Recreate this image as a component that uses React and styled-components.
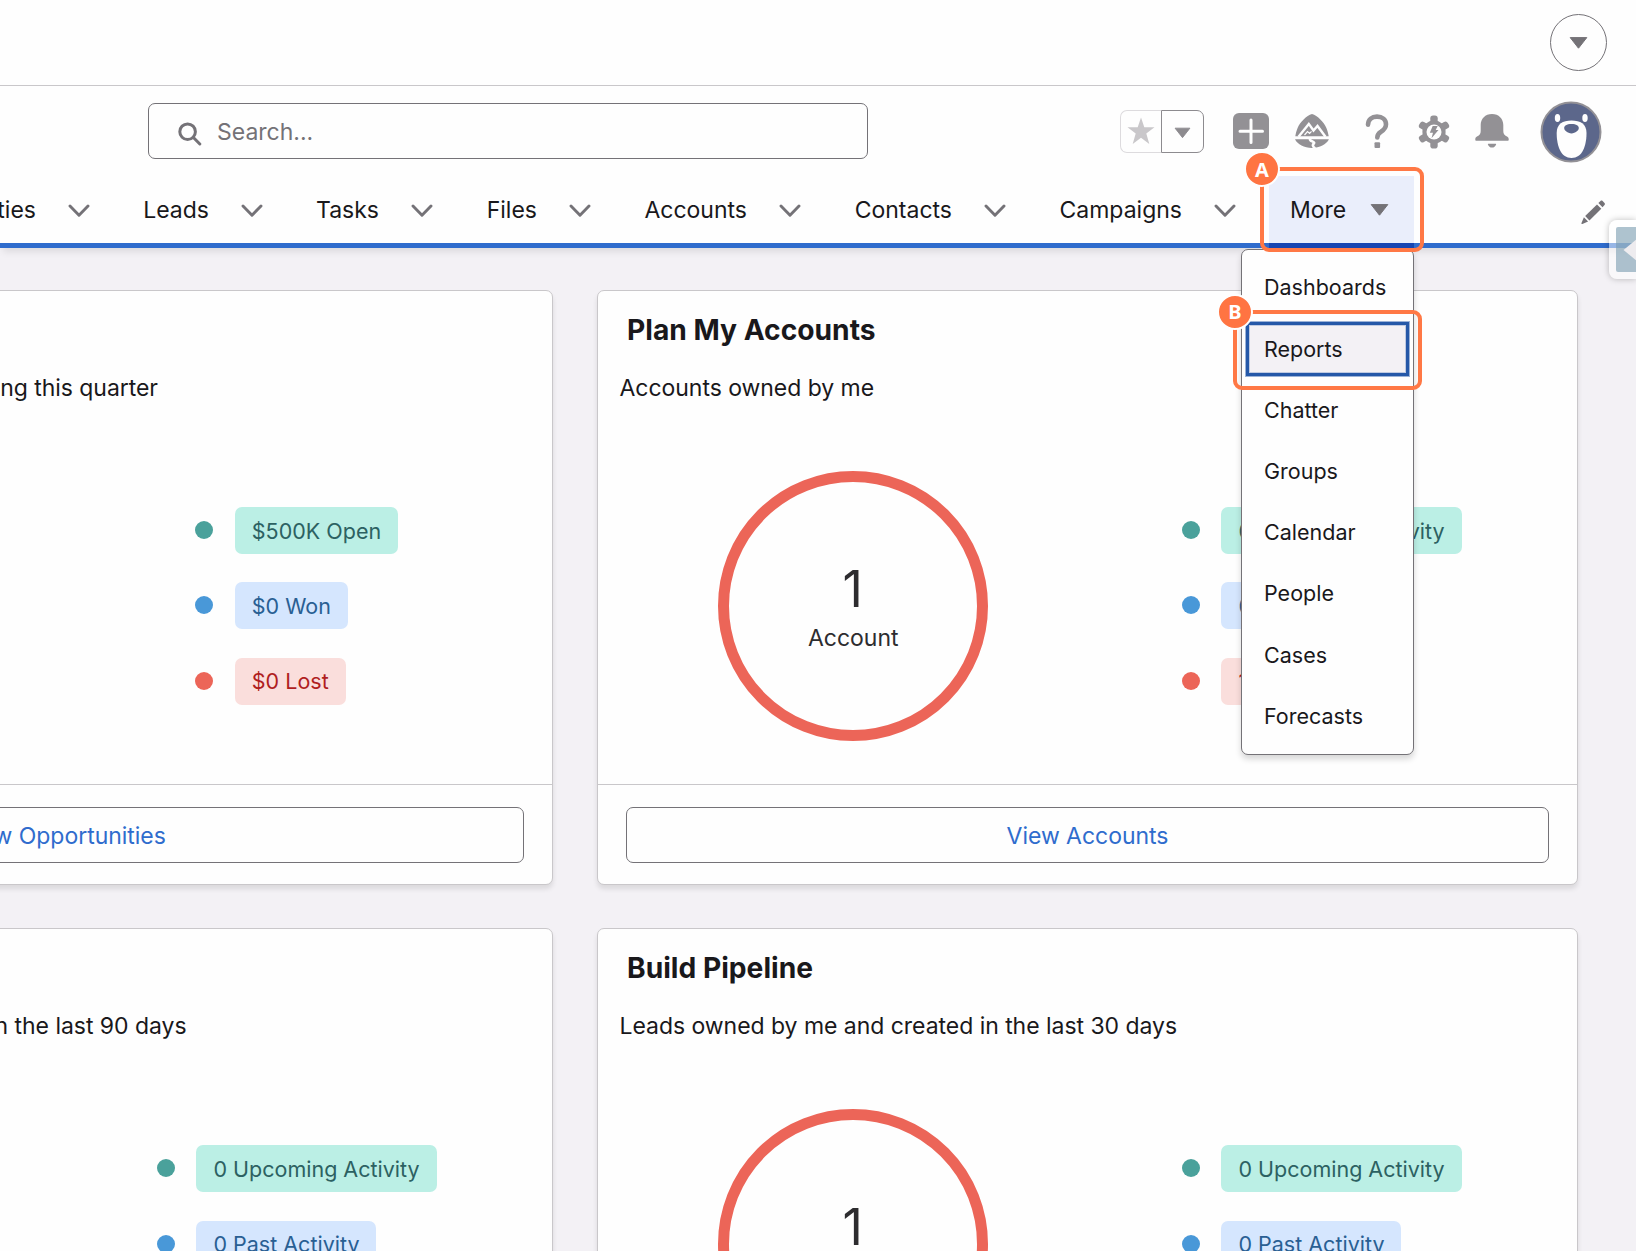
import styled, { createGlobalStyle } from "styled-components";

const navItems = [
    { label: 'Opportunities', width: 174 },
    { label: 'Leads', width: 173 },
    { label: 'Tasks', width: 170 },
    { label: 'Files', width: 158 },
    { label: 'Accounts', width: 210 },
    { label: 'Contacts', width: 205 },
    { label: 'Campaigns', width: 230 },
];

const menuItems = ['Dashboards', 'Reports', 'Chatter', 'Groups', 'Calendar', 'People', 'Cases', 'Forecasts'];

const activityLegend = [
    { tone: 'green', text: '0 Upcoming Activity' },
    { tone: 'blue', text: '0 Past Activity' },
    { tone: 'red', text: '1 No Activity' },
];

const cards = [
    {
        title: 'Close Deals',
        subtitle: 'Opportunities owned by me and closing this quarter',
        value: '$500K',
        unit: 'Opportunities',
        button: 'View Opportunities',
        legend: [
            { tone: 'green', text: '$500K Open' },
            { tone: 'blue', text: '$0 Won' },
            { tone: 'red', text: '$0 Lost' },
        ],
    },
    { title: 'Plan My Accounts', subtitle: 'Accounts owned by me', value: '1', unit: 'Account', button: 'View Accounts', legend: activityLegend },
    { title: 'Grow Relationships', subtitle: 'Contacts owned by me and created in the last 90 days', value: '1', unit: 'Contact', button: 'View Contacts', legend: activityLegend },
    { title: 'Build Pipeline', subtitle: 'Leads owned by me and created in the last 30 days', value: '1', unit: 'Lead', button: 'View Leads', legend: activityLegend },
];

const tones = {
    green: { dot: '#4aa19b', back: '#bbefe5', text: '#2c6162' },
    blue: { dot: '#4998d8', back: '#d5e6fe', text: '#295f93' },
    red: { dot: '#ec6558', back: '#fadedc', text: '#b01e1f' },
};

function Triangle({ color }) {
    return (
        <svg width="19" height="12" viewBox="0 0 19 12">
            <path d="M1.2 0.6h16.6L9.5 11.2z" fill={color} stroke={color} strokeWidth="1" strokeLinejoin="round" />
        </svg>
    );
}

function Chevron() {
    return (
        <svg width="22" height="14" viewBox="0 0 22 14">
            <path d="M2 2l9 9.2L20 2" fill="none" stroke="#747277" strokeWidth="2.9" strokeLinecap="round" strokeLinejoin="round" />
        </svg>
    );
}

function SearchIcon() {
    return (
        <svg width="24" height="24" viewBox="0 0 24 24">
            <circle cx="9.6" cy="9.7" r="7.8" fill="none" stroke="#747277" strokeWidth="3" />
            <path d="M15.4 15.5l6.4 6.5" stroke="#747277" strokeWidth="3" strokeLinecap="round" />
        </svg>
    );
}

function StarIcon() {
    return (
        <svg width="28" height="28" viewBox="0 0 28 28">
            <path d="M14 0.5l3.3 9.8h10.2l-8.2 6.2 3 10.4L14 20.8l-8.3 6.1 3-10.4L0.5 10.3h10.2z" fill="#c9c7ca" />
        </svg>
    );
}

function TrailheadIcon() {
    return (
        <svg width="36" height="36" viewBox="0 0 36 36">
            <path d="M18 1C12.5 2.7 6 9 3.6 15c-1 2.5-1.9 5.5-2.3 8.2h33.4c-.4-2.7-1.3-5.7-2.3-8.2C30 9 23.5 2.7 18 1z" fill="#939195" />
            <path d="M4.5 23.8L14.8 10.9l4.7 6.6 4-4.5 8 10.8" fill="none" stroke="#fefefe" strokeWidth="2.4" />
            <path d="M10.5 22l3-3.5 2.1 2 1.9-2.2" fill="none" stroke="#fefefe" strokeWidth="1.2" />
            <path d="M1 26.3h33.9c-2.5 5.4-9.3 8.6-17 8.6S3.5 31.7 1 26.3z" fill="#939195" />
            <path d="M16.2 25.5c-1.6 2.8 5.5 3 3.6 5-1.5 1.4-1.2 3 1.4 4.9" fill="none" stroke="#fefefe" strokeWidth="2.6" />
        </svg>
    );
}

function HelpIcon() {
    return (
        <svg width="24" height="36" viewBox="0 0 24 36">
            <path d="M3 11.7C3.2 6.4 6.8 3.6 12 3.6c5.3 0 9 3.2 9 7.7 0 3.7-2.2 5.7-5 7.5-2.8 1.7-3.7 2.9-3.7 5.7" fill="none" stroke="#939195" strokeWidth="4.6" strokeLinecap="round" />
            <rect x="9.5" y="29.3" width="5.6" height="5.6" rx="1" fill="#939195" />
        </svg>
    );
}

function GearIcon() {
    return (
        <svg width="32" height="36" viewBox="0 0 32 36">
            <g fill="#939195">
                <circle cx="16" cy="19" r="11.6" />
                {[0, 60, 120].map((angle) => (
                    <rect key={angle} x="12.3" y="2.5" width="7.4" height="33" rx="2.8" transform={`rotate(${angle} 16 19)`} />
                ))}
            </g>
            <circle cx="16" cy="19" r="7.5" fill="#fefefe" />
            <path d="M14.7 12.9h5l-2 4.200h2.8l-7 8.200 1.500-5.600h-3.200z" fill="#939195" />
        </svg>
    );
}

function BellIcon() {
    return (
        <svg width="34" height="36" viewBox="0 0 34 36">
            <path d="M17 1C10.2 1 5.7 5.8 5.7 12v6c0 2.4-.9 4.3-3.7 5.4-1 .5-1.7 1.4-1.7 2.5V27c0 .5.3.8.8.8h31.800c.5 0 .8-.3.8-.8v-1.100c0-1.100-.7-2-1.700-2.500-2.800-1.100-3.700-3-3.700-5.400v-6C28.300 5.800 23.800 1 17 1z" fill="#939195" />
            <path d="M13.4 30.8h7.200c.5 0 .7.3.5.7-.7 2-2.200 3.100-4.100 3.100s-3.400-1.100-4.100-3.100c-.2-.4 0-.7.5-.7z" fill="#939195" />
        </svg>
    );
}

function PencilIcon() {
    return (
        <svg width="24" height="25" viewBox="0 0 24 25">
            <g fill="#747277">
                <path d="M16 4.4l4.3 4.3L8.4 20.4l-4.2-4.3z" />
                <path d="M17.4 3l2.1-2c.7-.6 1.5-.5 2.1 0l1.9 1.9c.6.7.6 1.5 0 2.2l-2 2.1z" />
                <path d="M2.9 17.3l4.2 4.3-5.7 2.4c-.7.2-1.2-.2-.9-.9z" />
            </g>
        </svg>
    );
}

function Avatar() {
    return (
        <svg width="62" height="62" viewBox="0 0 62 62">
            <circle cx="31" cy="31" r="29.5" fill="#5c678b" stroke="#939196" strokeWidth="2" />
            <ellipse cx="17.5" cy="17" rx="2.7" ry="3.9" fill="#fefefe" />
            <ellipse cx="45" cy="17" rx="2.7" ry="3.9" fill="#fefefe" />
            <path d="M31.5 19.5c8.8 0 15 3.4 15 12.5 0 13.5-4.5 25-15 25S16.7 45.5 16.7 32c0-9.1 6-12.5 14.8-12.5z" fill="#fefefe" />
            <path d="M31.5 22.9c5 0 7.3 1.6 7.3 4.2 0 2.5-3.4 5.3-7.3 5.3s-7.3-2.8-7.3-5.3c0-2.6 2.3-4.2 7.3-4.2z" fill="#5c678b" />
        </svg>
    );
}

function Card({ card }) {
    return (
        <CardBox>
            <h2>{card.title}</h2>
            <p>{card.subtitle}</p>
            <ChartRow>
                <Donut>
                    <strong>{card.value}</strong>
                    <span>{card.unit}</span>
                </Donut>
                <Legend>
                    {card.legend.map((item) => (
                        <LegendRow key={item.text}>
                            <Dot $tone={item.tone} />
                            <Pill $tone={item.tone}>{item.text}</Pill>
                        </LegendRow>
                    ))}
                </Legend>
            </ChartRow>
            <CardFooter>
                <button>{card.button}</button>
            </CardFooter>
        </CardBox>
    );
}

export default function App() {
    return (
        <Page>
            <GlobalStyle />
            <TopBar>
                <RoundButton><Triangle color="#747277" /></RoundButton>
            </TopBar>
            <SearchRow>
                <SearchBox>
                    <SearchIcon />
                    <span>Search...</span>
                </SearchBox>
                <Favorites>
                    <StarButton><StarIcon /></StarButton>
                    <StarMenu><Triangle color="#8d8b8f" /></StarMenu>
                </Favorites>
                <AddButton>
                    <svg width="26" height="26" viewBox="0 0 26 26">
                        <path d="M13 2v22.5M2 13.3h22.5" stroke="#fefefe" strokeWidth="3" strokeLinecap="round" />
                    </svg>
                </AddButton>
                <IconSlot $width={36} $gap={25}><TrailheadIcon /></IconSlot>
                <IconSlot $width={24} $gap={35}><HelpIcon /></IconSlot>
                <IconSlot $width={32} $gap={29}><GearIcon /></IconSlot>
                <IconSlot $width={34} $gap={25}><BellIcon /></IconSlot>
                <IconSlot $width={62} $gap={31} $drop={1}><Avatar /></IconSlot>
            </SearchRow>
            <NavBar>
                {navItems.map((item) => (
                    <NavItem key={item.label} $width={item.width}>
                        <span>{item.label}</span>
                        <Chevron />
                    </NavItem>
                ))}
                <MoreItem>
                    <span>More</span>
                    <Triangle color="#747277" />
                    <Menu>
                        {menuItems.map((label) => (
                            <MenuItem key={label}>
                                <MenuLabel $focused={label === 'Reports'}>{label}</MenuLabel>
                                {label === 'Reports' && (
                                    <ReportsCallout>
                                        <CalloutBadge>B</CalloutBadge>
                                    </ReportsCallout>
                                )}
                            </MenuItem>
                        ))}
                    </Menu>
                    <MoreCallout>
                        <CalloutBadge>A</CalloutBadge>
                    </MoreCallout>
                </MoreItem>
                <EditButton><PencilIcon /></EditButton>
            </NavBar>
            <Board>
                {cards.map((card) => <Card key={card.title} card={card} />)}
            </Board>
            <SideTab>
                <div>
                    <svg width="14" height="24" viewBox="0 0 14 24">
                        <path d="M0.5 12L14 1v22z" fill="#eeecef" />
                    </svg>
                </div>
            </SideTab>
        </Page>
    );
}

const GlobalStyle = createGlobalStyle`
    *{
        box-sizing: border-box;
    }

    body{
        margin: 0;
        overflow: hidden;
        background-color: #f3f2f5;
    }

    h2, p{
        margin: 0;
    }

    svg{
        display: block;
        flex-shrink: 0;
    }

    button{
        font-family: inherit;
    }
`

const Page = styled.div`
    position: relative;

    width: 1636px;
    height: 1251px;
    overflow: hidden;

    display: flex;
    flex-direction: column;

    background-color: #f3f1f5;

    font-family: Inter, 'Liberation Sans', sans-serif;
    font-size: 23px;
    color: #19181b;
    white-space: nowrap;
`

const TopBar = styled.div`
    height: 86px;
    flex-shrink: 0;
    padding: 0 29px 1px 0;

    display: flex;
    justify-content: flex-end;
    align-items: center;

    background-color: #fefefe;
    border-bottom: 1px solid #c9c7ca;
`

const RoundButton = styled.div`
    width: 57px;
    height: 57px;
    padding-top: 2px;

    display: flex;
    justify-content: center;
    align-items: center;

    border: 1px solid #747277;
    border-radius: 50%;
`

const SearchRow = styled.div`
    position: relative;
    z-index: 1;

    height: 90px;
    flex-shrink: 0;
    padding: 0 34px 0 148px;

    display: flex;
    align-items: center;

    background-color: #fefefe;
`

const SearchBox = styled.div`
    width: 720px;
    height: 56px;
    padding: 2px 29px 0;

    display: flex;
    align-items: center;
    gap: 15px;

    border: 1px solid #747277;
    border-radius: 7px;

    color: #747277;

    svg{
        margin-top: 4px;
    }
`

const Favorites = styled.div`
    margin-left: 252px;
    height: 43px;

    display: flex;
`

const StarButton = styled.div`
    width: 41px;

    display: flex;
    justify-content: center;
    align-items: center;

    border: 1px solid #dddbde;
    border-right: none;
    border-radius: 7px 0 0 7px;
`

const StarMenu = styled.div`
    width: 43px;
    padding-top: 4px;

    display: flex;
    justify-content: center;
    align-items: center;

    border: 1px solid #8d8b8f;
    border-radius: 0 7px 7px 0;

    svg{
        width: 17px;
    }
`

const AddButton = styled.div`
    width: 36px;
    height: 36px;
    margin-left: 29px;

    display: flex;
    justify-content: center;
    align-items: center;

    background-color: #939195;
    border-radius: 6px;
`

const IconSlot = styled.div`
    width: ${({ $width }) => $width}px;
    margin-left: ${({ $gap }) => $gap}px;
    padding-top: ${({ $drop }) => ($drop || 0) * 2}px;
`

const NavBar = styled.div`
    position: relative;
    z-index: 2;

    height: 72px;
    flex-shrink: 0;
    padding-right: 31px;

    display: flex;

    background-color: #fefefe;
    border-bottom: 5px solid #2f6ccd;
    box-shadow: 0 7px 7px -3px rgba(0, 0, 0, 0.09);
`

const NavItem = styled.div`
    width: ${({ $width }) => $width}px;
    flex-shrink: 0;

    display: flex;
    justify-content: flex-end;
    align-items: center;
    gap: 32px;

    &:first-child{
        width: 90px;
    }

    svg{
        margin-top: 2px;
    }
`

const MoreItem = styled.div`
    position: relative;

    width: 145px;
    height: 72px;
    margin-left: 33px;
    padding: 0 25px 0 21px;

    display: flex;
    justify-content: space-between;
    align-items: center;

    background-color: #eaeefb;
    border-bottom: 5px solid #1745b2;

    > svg{
        margin-top: 1px;
    }
`

const Menu = styled.div`
    position: absolute;
    top: 73px;
    right: 0;

    width: 173px;
    height: 506px;
    padding-top: 6.4px;

    background-color: #fefefe;
    border: 1px solid #747277;
    border-radius: 7px;
    box-shadow: 0 4px 6px rgba(0, 0, 0, 0.16);

    font-size: 21.5px;
`

const MenuItem = styled.div`
    position: relative;

    height: 61.2px;
    padding: 4px 4px 3px;
`

const MenuLabel = styled.div`
    height: 54px;
    padding-left: ${({ $focused }) => ($focused ? '15px' : '18px')};

    display: flex;
    align-items: center;

    background-color: ${({ $focused }) => ($focused ? '#f3f1f5' : 'transparent')};
    border: ${({ $focused }) => ($focused ? '3px solid #2558a8' : 'none')};
    box-shadow: ${({ $focused }) => ($focused ? '0 0 0 1px rgba(37, 88, 168, 0.45), inset 0 0 0 1px rgba(37, 88, 168, 0.25)' : 'none')};
`

const Callout = styled.div`
    position: absolute;

    border: 4px solid #ff7845;
    border-radius: 9px;
`

const MoreCallout = styled(Callout)`
    top: -9px;
    left: -9px;

    width: 164px;
    height: 85px;
`

const ReportsCallout = styled(Callout)`
    top: -8px;
    left: -9px;

    width: 189px;
    height: 80px;
`

const CalloutBadge = styled.div`
    position: absolute;
    top: -20px;
    left: -20px;

    width: 36px;
    height: 36px;

    display: flex;
    justify-content: center;
    align-items: center;

    background-color: #ff7442;
    border: 2px solid #fefefe;
    border-radius: 50%;

    color: #FFFFFF;
    font-family: 'Noto Sans', sans-serif;
    font-size: 20px;
    font-weight: 700;
`

const EditButton = styled.div`
    margin-left: auto;
    padding-top: 24px;
`

const Board = styled.div`
    width: 2006px;
    margin: 42px 0 0 -428px;

    display: grid;
    grid-template-columns: 981px 981px;
    gap: 43.4px 44px;
`

const CardBox = styled.div`
    height: 595px;

    display: flex;
    flex-direction: column;

    background-color: #fefefe;
    border: 1px solid #c9c7ca;
    border-radius: 7px;
    box-shadow: 0 4px 5px rgba(0, 0, 0, 0.1);

    h2{
        padding: 22px 0 0 29px;

        font-size: 28.2px;
        font-weight: 700;
        line-height: 34px;
    }

    p{
        padding: 27px 0 0 21.5px;

        letter-spacing: -0.04px;
        line-height: 28px;
    }

    &:nth-child(odd) p{
        padding-left: 24.5px;
    }
`

const ChartRow = styled.div`
    height: 270px;
    margin-top: 69px;
    padding: 0 21px;

    display: grid;
    grid-template-columns: 1fr 1fr;
    justify-items: center;
    align-items: start;
`

const Donut = styled.div`
    width: 270px;
    height: 270px;
    padding-top: 2px;

    display: flex;
    flex-direction: column;
    justify-content: center;
    align-items: center;

    border: 11px solid #ec6558;
    border-radius: 50%;

    color: #2d2c2f;

    strong{
        padding-right: 1px;

        font-size: 50px;
        font-weight: 400;
        line-height: 62px;
    }

    span{
        line-height: 36px;
    }
`

const Legend = styled.div`
    margin-top: 36px;

    display: flex;
    flex-direction: column;
    gap: 28.4px;
`

const LegendRow = styled.div`
    display: flex;
    align-items: center;
    gap: 21.5px;
`

const Dot = styled.div`
    width: 18px;
    height: 18px;
    margin-bottom: 1px;

    background-color: ${({ $tone }) => tones[$tone].dot};
    border-radius: 50%;
`

const Pill = styled.div`
    height: 47px;
    padding: 0 17px;

    display: flex;
    align-items: center;

    background-color: ${({ $tone }) => tones[$tone].back};
    border-radius: 7px;

    color: ${({ $tone }) => tones[$tone].text};
    font-size: 21.5px;
`

const CardFooter = styled.div`
    margin-top: auto;
    padding: 22px 28px 21px;

    border-top: 1px solid #c9c7ca;

    button{
        display: block;

        width: 100%;
        height: 56px;
        padding: 2px 0 0;

        background-color: #fefefe;
        border: 1px solid #747277;
        border-radius: 7px;

        color: #2f6ccd;
        font-size: 23px;
        letter-spacing: -0.03px;
    }
`

const SideTab = styled.div`
    position: absolute;
    z-index: 3;
    top: 220px;
    right: 0;

    width: 27px;
    height: 59px;
    padding: 7px 0 7px 7px;

    background-color: rgba(255, 255, 255, 0.5);
    border-radius: 8px 0 0 8px;
    box-shadow: 0 0 6px rgba(0, 0, 0, 0.25);

    div{
        height: 45px;
        padding-left: 7px;

        display: flex;
        align-items: center;

        background-color: rgba(120, 155, 175, 0.6);
        border-radius: 2px 0 0 2px;
    }
`
